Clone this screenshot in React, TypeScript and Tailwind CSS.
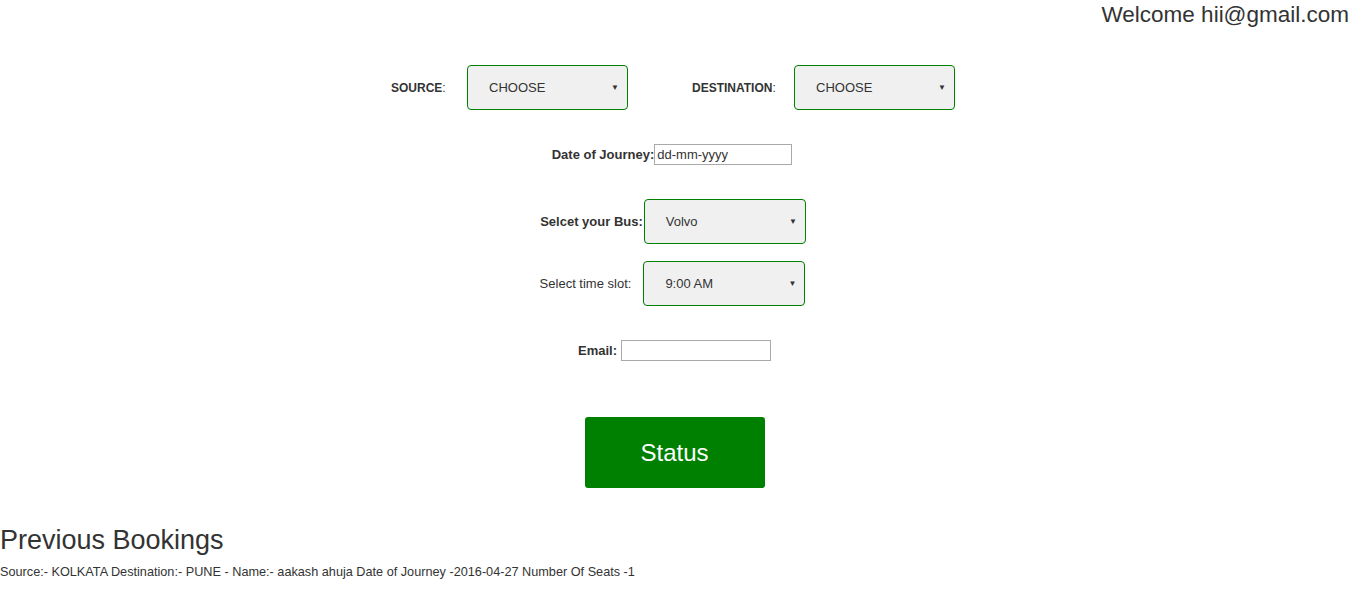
import React from "react";

function Sel({ text, w = "w-[161px]" }: { text: string; w?: string }) {
  return (
    <div className={`${w} h-[45px] bg-[#f0f0f0] border border-[#008000] rounded-[4px] flex items-center justify-between pl-[21px] pr-[8px] text-[13px] text-[#333]`}>
      <span>{text}</span>
      <span className="text-[8px] leading-none">▼</span>
    </div>
  );
}

export default function App() {
  return (
    <div className="w-[1349px] h-[610px] bg-white text-[#333] overflow-hidden" style={{ fontFamily: '"Liberation Sans", Arial, sans-serif' }}>
      <div className="flex justify-end h-[30px]">
        <div className="text-[22.5px] leading-[30px] pr-0">Welcome hii@gmail.com</div>
      </div>
      <div className="flex justify-center items-center mt-[35px] h-[45px] text-[12px] pr-[3px]">
        <span className="font-bold w-[55px]">SOURCE<span className="font-normal">:</span></span>
        <div className="ml-[21px]"><Sel text="CHOOSE" /></div>
        <span className="font-bold ml-[64px] w-[89px]">DESTINATION<span className="font-normal">:</span></span>
        <div className="ml-[13px]"><Sel text="CHOOSE" /></div>
      </div>
      <div className="flex justify-center items-center mt-[34px] h-[21px] text-[13px] pr-[5px]">
        <span className="font-bold">Date of Journey:</span>
        <div className="w-[138px] h-[21px] border border-[#a9a9a9] flex items-center pl-[2px] text-[13px]">dd-mm-yyyy</div>
      </div>
      <div className="flex justify-center items-center mt-[34px] h-[45px] text-[13px] pr-[3px]">
        <span className="font-bold mr-[1px]">Selcet your Bus:</span>
        <Sel text="Volvo" w="w-[162px]" />
      </div>
      <div className="flex justify-center items-center mt-[17px] h-[45px] text-[13px] pr-[4px]">
        <span className="mr-[12px]">Select time slot:</span>
        <Sel text="9:00 AM" w="w-[162px]" />
      </div>
      <div className="flex justify-center items-center mt-[34px] h-[21px] text-[13px]">
        <span className="font-bold mr-[4px]">Email:</span>
        <div className="w-[150px] h-[21px] border border-[#a9a9a9]"></div>
      </div>
      <div className="flex justify-center mt-[56px]">
        <button className="w-[180px] h-[71px] bg-[#008000] rounded-[3px] text-white text-[24px]">Status</button>
      </div>
      <div className="mt-[36px] text-[27px] leading-[32px]">Previous Bookings</div>
      <div className="mt-[8px] text-[12.7px] leading-[16px]">Source:- KOLKATA Destination:- PUNE - Name:- aakash ahuja Date of Journey -2016-04-27 Number Of Seats -1</div>
    </div>
  );
}
